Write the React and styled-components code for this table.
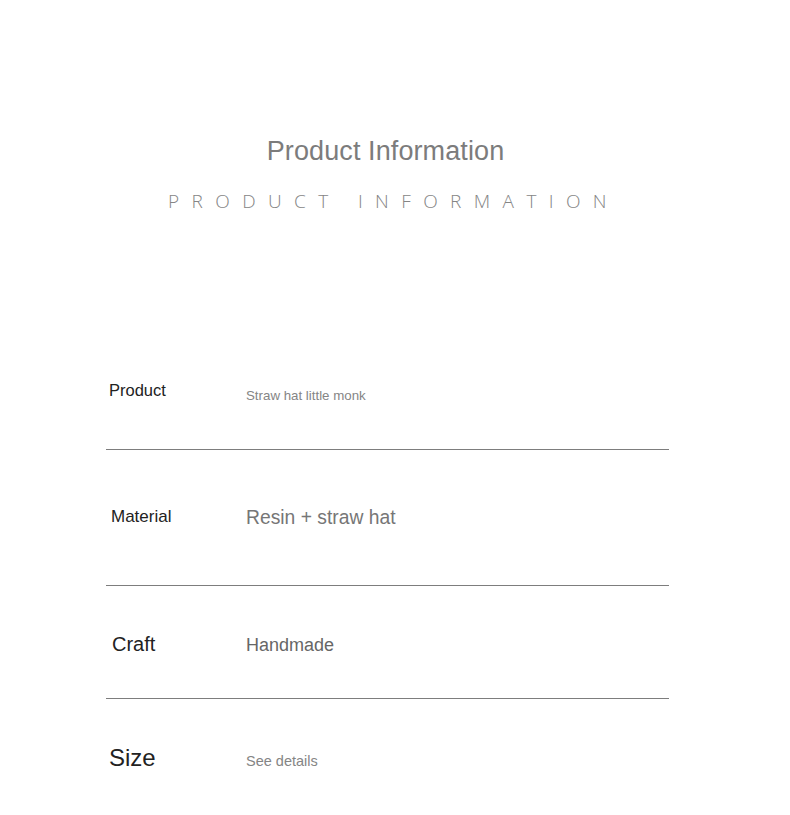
import React from "react";
import styled, { createGlobalStyle } from "styled-components";

const GlobalStyle = createGlobalStyle`
  html, body {
    margin: 0;
    padding: 0;
    background: #ffffff;
  }
  body {
    font-family: "Liberation Sans", Arial, sans-serif;
  }
`;

const rows = [
  { label: "Product", value: "Straw hat little monk", labelSize: 16.5, labelIndent: 3, labelShift: -2, valueSize: 13.3, valueColor: "#858585", pad: 40, height: 110, shift: 3 },
  { label: "Material", value: "Resin + straw hat", labelSize: 17, labelIndent: 5, labelShift: 0, valueSize: 19.3, valueColor: "#767676", pad: 55, height: 136, shift: 1 },
  { label: "Craft", value: "Handmade", labelSize: 20, labelIndent: 6, labelShift: 0, valueSize: 18, valueColor: "#666666", pad: 46, height: 113, shift: 1 },
  { label: "Size", value: "See details", labelSize: 24, labelIndent: 3, labelShift: 0, valueSize: 14.5, valueColor: "#858585", pad: 47, height: 116, shift: 3, last: true },
];

const App = () => {
  return (
    <Page>
      <GlobalStyle />
      <Sheet>
        <Heading>
          <Title>Product Information</Title>
          <Subtitle>PRODUCT INFORMATION</Subtitle>
        </Heading>
        <Table>
          {rows.map((row) => (
            <Row key={row.label} $pad={row.pad} $height={row.height} $last={row.last}>
              <Label $size={row.labelSize} $indent={row.labelIndent} $shift={row.labelShift}>
                {row.label}
              </Label>
              <Value $size={row.valueSize} $color={row.valueColor} $shift={row.shift}>
                {row.value}
              </Value>
            </Row>
          ))}
        </Table>
      </Sheet>
    </Page>
  );
};

const Page = styled.div`
  width: 790px;
  height: 815px;
  overflow: hidden;
  background: #ffffff;
`;

const Sheet = styled.div`
  width: 563px;
  margin-left: 106px;
  display: flex;
  flex-direction: column;
`;

const Heading = styled.div`
  display: flex;
  flex-direction: column;
  align-items: center;
  padding-top: 135px;
  height: 340px;
  box-sizing: border-box;
`;

const Title = styled.div`
  font-size: 27px;
  line-height: 33px;
  color: #7c7c7c;
  letter-spacing: 0.1px;
  margin-left: -4px;
`;

const Subtitle = styled.div`
  margin-top: 22px;
  margin-left: 12px;
  font-family: "Open Sans", "DejaVu Sans", sans-serif;
  font-weight: 300;
  font-size: 19px;
  line-height: 22px;
  letter-spacing: 12.4px;
  color: #858585;
`;

const Table = styled.div`
  display: flex;
  flex-direction: column;
`;

const Row = styled.div`
  display: flex;
  align-items: flex-start;
  align-self: stretch;
  height: ${(p) => p.$height}px;
  padding-top: ${(p) => p.$pad}px;
  box-sizing: border-box;
  border-bottom: ${(p) => (p.$last ? "none" : "1px solid #7d7d7d")};
`;

const Label = styled.div`
  width: 140px;
  padding-left: ${(p) => p.$indent}px;
  margin-top: ${(p) => p.$shift}px;
  box-sizing: border-box;
  height: 24px;
  display: flex;
  align-items: center;
  font-size: ${(p) => p.$size}px;
  color: #222222;
`;

const Value = styled.div`
  height: 24px;
  display: flex;
  align-items: center;
  margin-top: ${(p) => p.$shift - (p.$labelShift || 0)}px;
  font-size: ${(p) => p.$size}px;
  color: ${(p) => p.$color};
`;

export default App;
